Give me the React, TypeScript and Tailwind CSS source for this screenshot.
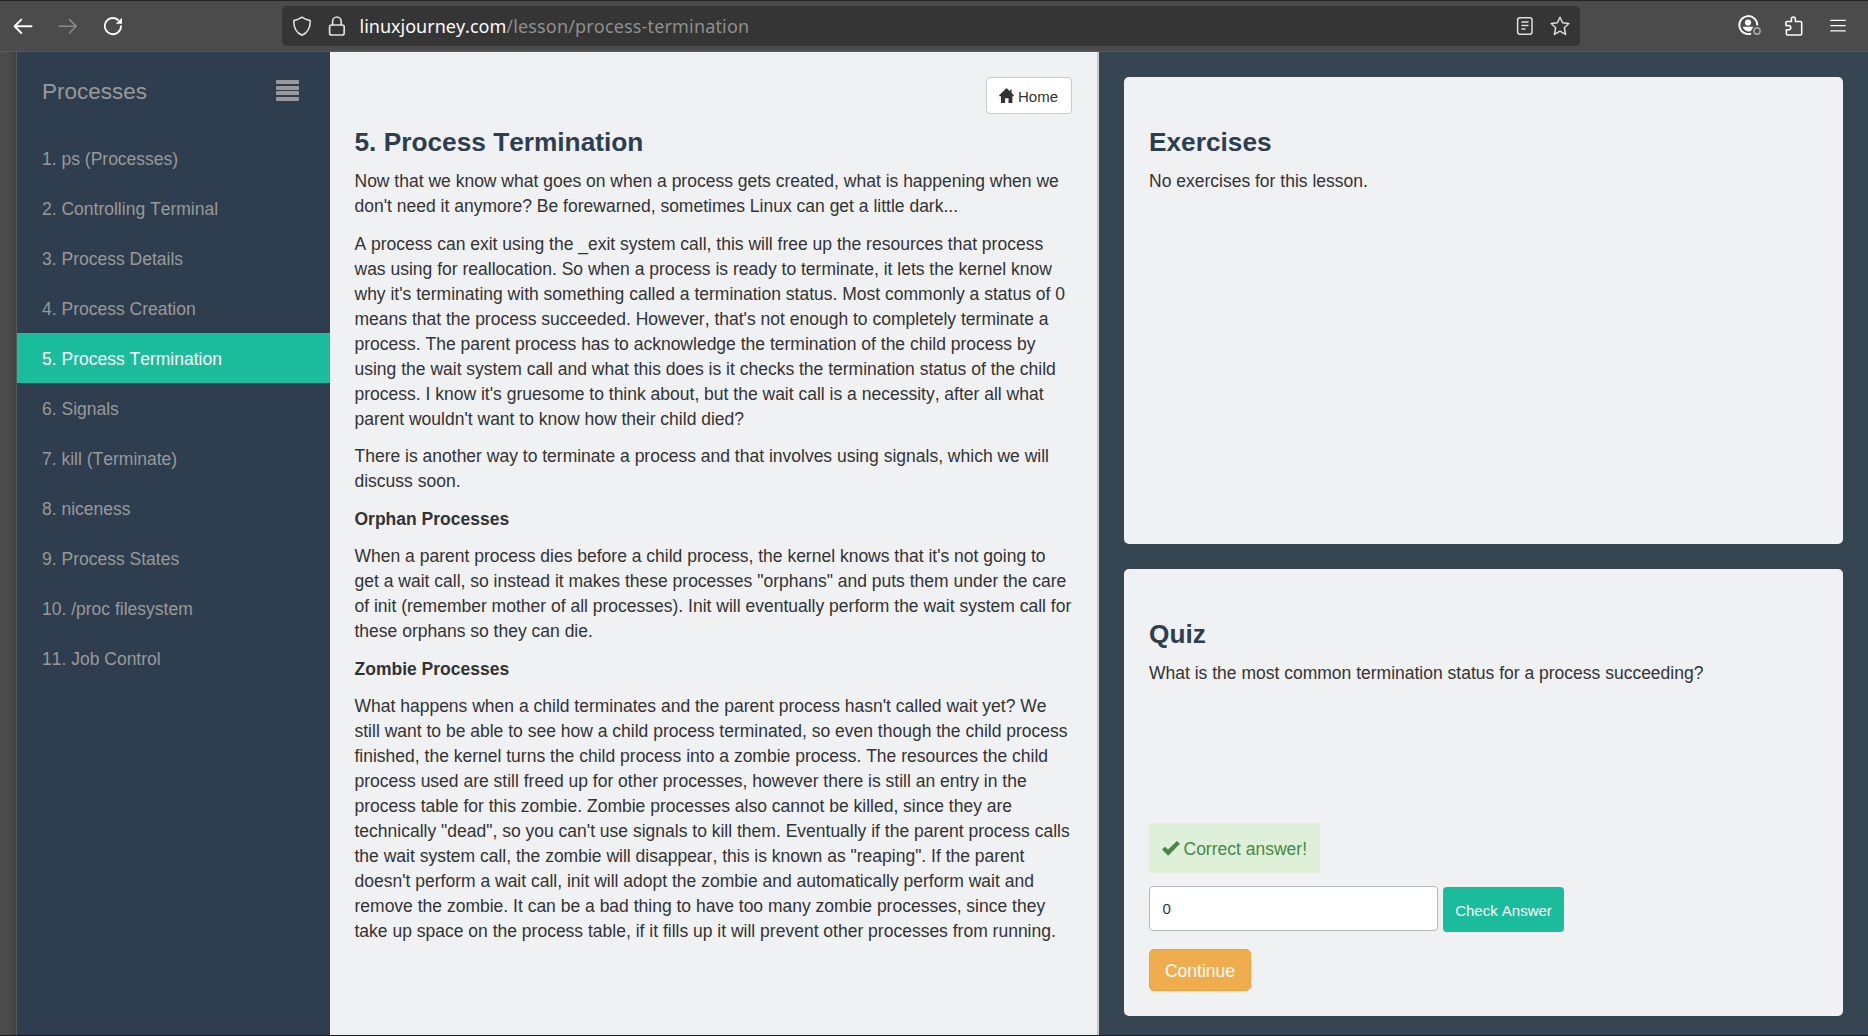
import React from "react";

const lessons = [
  "1. ps (Processes)",
  "2. Controlling Terminal",
  "3. Process Details",
  "4. Process Creation",
  "5. Process Termination",
  "6. Signals",
  "7. kill (Terminate)",
  "8. niceness",
  "9. Process States",
  "10. /proc filesystem",
  "11. Job Control",
];

type Block = { bold?: boolean; lines: string[] };

const article: Block[] = [
  {
    lines: [
      "Now that we know what goes on when a process gets created, what is happening when we",
      "don't need it anymore? Be forewarned, sometimes Linux can get a little dark...",
    ],
  },
  {
    lines: [
      "A process can exit using the _exit system call, this will free up the resources that process",
      "was using for reallocation. So when a process is ready to terminate, it lets the kernel know",
      "why it's terminating with something called a termination status. Most commonly a status of 0",
      "means that the process succeeded. However, that's not enough to completely terminate a",
      "process. The parent process has to acknowledge the termination of the child process by",
      "using the wait system call and what this does is it checks the termination status of the child",
      "process. I know it's gruesome to think about, but the wait call is a necessity, after all what",
      "parent wouldn't want to know how their child died?",
    ],
  },
  {
    lines: [
      "There is another way to terminate a process and that involves using signals, which we will",
      "discuss soon.",
    ],
  },
  { bold: true, lines: ["Orphan Processes"] },
  {
    lines: [
      "When a parent process dies before a child process, the kernel knows that it's not going to",
      "get a wait call, so instead it makes these processes \"orphans\" and puts them under the care",
      "of init (remember mother of all processes). Init will eventually perform the wait system call for",
      "these orphans so they can die.",
    ],
  },
  { bold: true, lines: ["Zombie Processes"] },
  {
    lines: [
      "What happens when a child terminates and the parent process hasn't called wait yet? We",
      "still want to be able to see how a child process terminated, so even though the child process",
      "finished, the kernel turns the child process into a zombie process. The resources the child",
      "process used are still freed up for other processes, however there is still an entry in the",
      "process table for this zombie. Zombie processes also cannot be killed, since they are",
      "technically \"dead\", so you can't use signals to kill them. Eventually if the parent process calls",
      "the wait system call, the zombie will disappear, this is known as \"reaping\". If the parent",
      "doesn't perform a wait call, init will adopt the zombie and automatically perform wait and",
      "remove the zombie. It can be a bad thing to have too many zombie processes, since they",
      "take up space on the process table, if it fills up it will prevent other processes from running.",
    ],
  },
];

const stroke = {
  fill: "none",
  stroke: "currentColor",
  strokeWidth: 1.6,
  strokeLinecap: "round" as const,
  strokeLinejoin: "round" as const,
};

function BackIcon() {
  return (
    <svg className="block h-5 w-5" viewBox="0 0 20 20" {...stroke} strokeWidth={2}>
      <path d="M18.5 10.3H2M8.3 3.6 1.6 10.3l6.7 6.7" />
    </svg>
  );
}

function ForwardIcon() {
  return (
    <svg className="block h-5 w-5" viewBox="0 0 20 20" {...stroke}>
      <path d="M1.5 10.3H18M11.5 3.6l6.7 6.7-6.7 6.7" />
    </svg>
  );
}

function ReloadIcon() {
  return (
    <svg className="block h-5 w-5" viewBox="0 0 20 20" {...stroke} strokeWidth={1.8}>
      <path d="M18 10.200a8.100 8.100 0 1 1-2.800-6.200" />
      <path d="M19 1.800v6h-6.200z" fill="currentColor" stroke="none" />
    </svg>
  );
}

function ShieldIcon() {
  return (
    <svg className="block h-5 w-5" viewBox="0 0 20 20" {...stroke}>
      <path d="M10 1.200C12.500 3 15.300 4 18.200 4.600 18.400 11 16 16.500 10 19.200 4 16.500 1.600 11 1.800 4.600 4.700 4 7.500 3 10 1.200z" />
    </svg>
  );
}

function LockIcon() {
  return (
    <svg className="block h-5 w-5" viewBox="0 0 20 20" {...stroke} strokeWidth={1.7}>
      <rect x="2.6" y="9" width="14.6" height="10" rx="2" />
      <path d="M5.6 9V5.3a4.3 4.3 0 0 1 8.6 0V9" />
    </svg>
  );
}

function ReaderIcon() {
  return (
    <svg className="block h-5 w-5" viewBox="0 0 20 20" {...stroke} strokeWidth={1.5}>
      <rect x="2.6" y="1.8" width="14.4" height="16.4" rx="2.2" />
      <path d="M7 6h6M7 9.6h6M7 13h3" />
    </svg>
  );
}

function StarIcon() {
  return (
    <svg className="block h-5 w-5" viewBox="0 0 20 20" {...stroke} strokeWidth={1.5}>
      <path d="M10 1.2l2.6 5.5 6.3.8-4.6 4.2 1.3 6.7L10 15.2l-5.6 3.2 1.3-6.7L1.1 7.5l6.3-.8z" />
    </svg>
  );
}

function AccountIcon() {
  return (
    <svg className="block h-6 w-6" viewBox="0 0 24 24" fill="none">
      <path d="M14.2 19.6A9 9 0 1 1 20.3 11.5" stroke="currentColor" strokeWidth="1.9" />
      <circle cx="11" cy="8.500" r="3.100" fill="currentColor" />
      <path d="M5.400 12.800h11.200l-1.600 2-1 2.200c-2.500 1-6 .6-8.600-4.200z" fill="currentColor" />
      <circle cx="20" cy="17" r="3.100" stroke="#a6a6a6" strokeWidth="1.600" />
    </svg>
  );
}

function ExtensionIcon() {
  return (
    <svg className="block h-5 w-5" viewBox="0 0 20 20" {...stroke}>
      <path d="M2.400 18V13.800h2.300a2.100 2.100 0 0 0 0-4.200H1.900V6.500a1 1 0 0 1 1-1h4.500V2.900a1.900 1.900 0 0 1 3.900 0v2.600h5.200a1.200 1.200 0 0 1 1.200 1.200v11.100a1.200 1.200 0 0 1-1.200 1.200H3.400a1 1 0 0 1-1-1z" />
    </svg>
  );
}

function MenuIcon() {
  return (
    <svg className="block h-4 w-4" viewBox="0 0 16 16" {...stroke} strokeWidth={1.4}>
      <path d="M.8 2.400h14.400M.8 7.600h14.400M.8 12.900h14.400" />
    </svg>
  );
}

function HomeGlyph() {
  return (
    <svg className="mr-1 block h-[15px] w-[15px]" viewBox="0 0 15 15" fill="currentColor">
      <path d="M7.500 0 11.200 3.600V1.600h1.400v3.400L15 7.600l-.6.600h-1V15H9.500v-4.700h-3.400V15H2V8.200H.6L0 7.600z" />
    </svg>
  );
}

function CheckGlyph() {
  return (
    <svg className="mr-[3.500px] -mt-[2px] block h-[15px] w-[18px]" viewBox="0 0 18 15" fill="currentColor">
      <path d="M0 8.600 3 5.700 6.100 8.500 14.900 0 18 2.800 6.200 14.800z" />
    </svg>
  );
}

function Toolbar() {
  return (
    <header className="flex h-[52px] shrink-0 items-start border-t border-b border-t-[#242424] border-b-[#5a5a5a] bg-[#4b4b4b] pt-[5px] text-[#fbfbfb]">
      <div className="flex h-10 w-[282px] items-center pl-[13px]">
        <BackIcon />
        <span className="ml-[25px] text-[#8a8a8a]">
          <ForwardIcon />
        </span>
        <span className="ml-[25px]">
          <ReloadIcon />
        </span>
      </div>
      <div className="flex h-10 w-[1298px] items-center rounded-[5px] bg-[#353535] pl-[10px] text-[#dedede]">
        <ShieldIcon />
        <span className="ml-[15px]">
          <LockIcon />
        </span>
        <span className="ml-[12.500px] flex-1 whitespace-pre font-['Noto_Sans'] text-[18px] leading-10 text-[#fbfbfb]">
          linuxjourney.com
          <span className="tracking-[0.160px] text-[#8f8f8f]">/lesson/process-termination</span>
        </span>
        <span className="mr-[15px]">
          <ReaderIcon />
        </span>
        <span className="mr-[10px]">
          <StarIcon />
        </span>
      </div>
      <div className="flex h-10 flex-1 items-center pl-[157px]">
        <AccountIcon />
        <span className="ml-[23px]">
          <ExtensionIcon />
        </span>
        <span className="ml-[26px]">
          <MenuIcon />
        </span>
      </div>
    </header>
  );
}

function Sidebar() {
  return (
    <nav className="flex w-[313px] shrink-0 flex-col bg-[#2e3e4f] text-[#999999]">
      <div className="flex h-[81px] items-start justify-between pl-[25px] pr-[31.500px]">
        <h2 className="mt-[24px] text-[22.5px] leading-[31px]">Processes</h2>
        <div className="mt-[28px] flex h-[21px] w-[23px] flex-col justify-between">
          <i className="h-[4px] rounded-[1px] bg-[#999999]" />
          <i className="h-[4px] rounded-[1px] bg-[#999999]" />
          <i className="h-[4px] rounded-[1px] bg-[#999999]" />
          <i className="h-[4px] rounded-[1px] bg-[#999999]" />
        </div>
      </div>
      <ul>
        {lessons.map((lesson, i) => (
          <li
            key={lesson}
            className={
              i === 4
                ? "h-[50px] bg-[#1abc9c] pl-[25px] leading-[52px] text-white"
                : "h-[50px] pl-[25px] leading-[52px]"
            }
          >
            {lesson}
          </li>
        ))}
      </ul>
    </nav>
  );
}

function Article() {
  return (
    <main className="flex w-[769px] shrink-0 flex-col border-r-2 border-[#cccccc] bg-[#f0f1f3] pl-[24.500px] pr-[25px] pt-[25px]">
      <button className="flex h-[37px] w-[86px] items-center self-end rounded-[4px] border border-[#cccccc] bg-white pl-[12px] text-[15px]">
        <HomeGlyph />
        <span className="pt-[2px]">Home</span>
      </button>
      <h3 className="mt-[14px] text-[26.25px] leading-[29px] font-bold text-[#2c3e50]">
        5. Process Termination
      </h3>
      <div className="mt-3 flex flex-col gap-[12.5px]">
        {article.map((block) => (
          <p key={block.lines[0]} className={block.bold ? "font-bold" : "font-normal"}>
            {block.lines.map((line) => (
              <span key={line} className="block whitespace-nowrap">
                {line}
              </span>
            ))}
          </p>
        ))}
      </div>
    </main>
  );
}

function Panels() {
  return (
    <aside className="flex flex-1 flex-col gap-[25px] bg-[#364552] p-[25px] pb-0">
      <section className="h-[467px] rounded-[5px] bg-[#f0f1f3] px-[25px] pt-[51px]">
        <h3 className="text-[26.25px] leading-[29px] font-bold text-[#2c3e50]">Exercises</h3>
        <p className="mt-3">No exercises for this lesson.</p>
      </section>
      <section className="flex h-[447px] flex-col items-start rounded-[5px] bg-[#f0f1f3] px-[25px] pt-[51px]">
        <h3 className="text-[26.25px] leading-[29px] font-bold text-[#2c3e50]">Quiz</h3>
        <p className="mt-3 h-[162px]">
          What is the most common termination status for a process succeeding?
        </p>
        <div className="flex h-[50px] w-[171px] items-center whitespace-nowrap bg-[#dff0d8] pt-[2px] pl-[13px] text-[#468847]">
          <CheckGlyph />
          Correct answer!
        </div>
        <div className="mt-[13px] flex h-[46px] items-start">
          <input
            readOnly
            value="0"
            className="h-[45px] w-[289px] rounded-[4px] border border-[#b8b8b8] bg-white px-[12.500px] text-[15px] text-[#333333] outline-none"
          />
          <button className="mt-px ml-[5px] h-[45px] w-[121px] rounded-[4px] bg-[#1abc9c] pt-[2px] text-[15px] text-white">
            Check Answer
          </button>
        </div>
        <button className="mt-[17px] h-[42px] w-[102px] rounded-[5px] border border-[#eea236] bg-[#f0ad4e] pt-[2px] text-white">
          Continue
        </button>
      </section>
    </aside>
  );
}

export default function App() {
  return (
    <div className="flex h-[1036px] w-[1868px] flex-col overflow-hidden border-b border-[#1c1c1c] bg-[#4b4b4b] font-['Liberation_Sans',sans-serif] text-[17.5px] leading-[25px] text-[#333333] [font-kerning:none]">
      <Toolbar />
      <div className="flex min-h-0 flex-1">
        <div className="w-[17px] shrink-0 border-r border-[#5c5a59] bg-linear-to-r from-[#4b4b4b] from-40% to-[#424242]" />
        <Sidebar />
        <Article />
        <Panels />
      </div>
    </div>
  );
}
